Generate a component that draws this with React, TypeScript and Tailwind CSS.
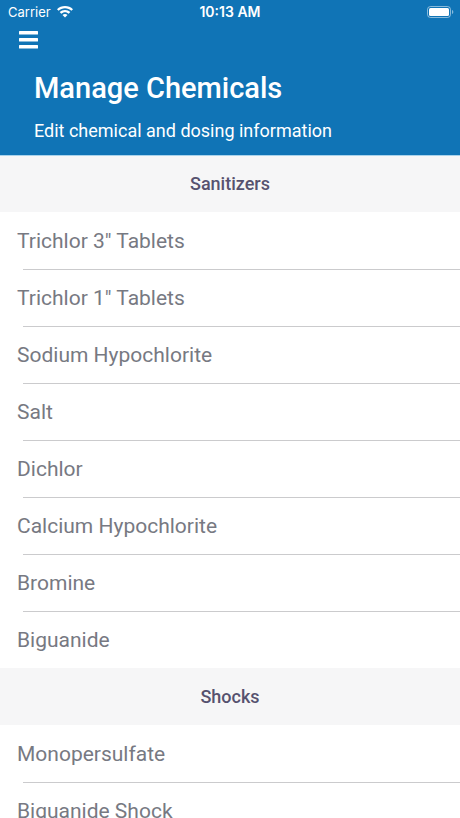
type Section = { title: string; items: string[] };

const sections: Section[] = [
  {
    title: "Sanitizers",
    items: [
      'Trichlor 3" Tablets',
      'Trichlor 1" Tablets',
      "Sodium Hypochlorite",
      "Salt",
      "Dichlor",
      "Calcium Hypochlorite",
      "Bromine",
      "Biguanide",
    ],
  },
  { title: "Shocks", items: ["Monopersulfate", "Biguanide Shock"] },
];

function WifiIcon() {
  return (
    <svg className="h-3 w-4" viewBox="0 0 16 12" fill="#fff" aria-hidden="true">
      <path d="M8 0C4.900 0 2.100 1.200 0 3.200L1.600 4.800C3.300 3.200 5.500 2.200 8 2.200s4.700 1 6.400 2.600L16 3.200C13.900 1.200 11.100 0 8 0Z" />
      <path d="M8 4C6 4 4.100 4.800 2.700 6.100l1.600 1.600C5.300 6.800 6.600 6.200 8 6.200s2.700.6 3.700 1.500l1.600-1.600C11.900 4.800 10 4 8 4Z" />
      <path d="M8 8c-1 0-1.900.4-2.500 1L8 11.600 10.500 9C9.900 8.400 9 8 8 8Z" />
    </svg>
  );
}

function BatteryIcon() {
  return (
    <svg className="h-3 w-7" viewBox="0 0 28 12" aria-hidden="true">
      <rect x="0.500" y="0.500" width="23" height="11" rx="3" fill="none" stroke="#fff" strokeOpacity="0.500" />
      <rect x="2" y="2" width="20" height="8" rx="1.500" fill="#fff" />
      <path d="M25 4v4c.8-.3 1.300-1.100 1.300-2S25.800 4.300 25 4Z" fill="#fff" fillOpacity="0.500" />
    </svg>
  );
}

function StatusBar() {
  return (
    <div className="grid h-6 grid-cols-3 items-center font-['Inter','Liberation_Sans',sans-serif] text-[13px] leading-5">
      <div className="flex items-center gap-1.5 pl-2">
        <span>Carrier</span>
        <WifiIcon />
      </div>
      <div className="text-center text-[14px] font-semibold">10:13 AM</div>
      <div className="flex justify-end pr-[5px]">
        <BatteryIcon />
      </div>
    </div>
  );
}

export default function App() {
  return (
    <div className="min-h-screen w-full bg-white font-['Roboto','Open_Sans',sans-serif]">
      <header className="relative h-[155px] bg-[#1074b6] text-white shadow-[0_1px_0_#a9d3ec]">
        <StatusBar />
        <button type="button" aria-label="Open menu" className="ml-[18px] flex h-8 items-center">
          <svg className="h-5 w-5" viewBox="0 0 20 20" fill="#fff" aria-hidden="true">
            <rect x="1" y="1" width="19" height="3.400" rx="0.500" />
            <rect x="1" y="8" width="19" height="3.400" rx="0.500" />
            <rect x="1" y="15" width="19" height="3.400" rx="0.500" />
          </svg>
        </button>
        <div className="px-[34px] pt-3">
          <h1 className="text-[29px] leading-10 font-medium">Manage Chemicals</h1>
          <p className="mt-2 text-[18px] leading-[30px]">Edit chemical and dosing information</p>
        </div>
      </header>
      <main>
        {sections.map((section) => (
          <section key={section.title}>
            <h2 className="flex h-[57px] items-center justify-center bg-[#f6f6f7] text-[18px] font-medium text-[#56526f]">
              {section.title}
            </h2>
            <ul>
              {section.items.map((item, index) => (
                <li key={item} className="flex h-[57px] flex-col">
                  <div className={index > 0 ? "ml-[23px] h-px bg-[#cbcbcd]" : "h-px"} />
                  <button type="button" className="flex-1 px-[17px] pt-0.5 text-left text-[21px] font-normal text-[#777982]">
                    {item}
                  </button>
                </li>
              ))}
            </ul>
          </section>
        ))}
      </main>
    </div>
  );
}
